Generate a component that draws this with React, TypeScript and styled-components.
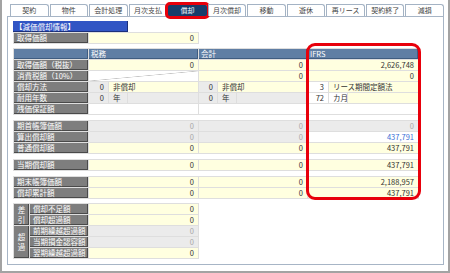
import React from "react";
import styled, { createGlobalStyle, css } from "styled-components";

const GlobalStyle = createGlobalStyle`
  html, body {
    margin: 0;
    padding: 0;
    background: #ffffff;
  }
  body {
    font-family: "Noto Sans CJK JP", "Noto Sans", sans-serif;
    font-size: 7.5px;
    color: #333333;
  }
  * {
    box-sizing: border-box;
  }
`;

type Tone = "yellow" | "grey" | "white" | "slash";
type Ink = "normal" | "muted" | "link";

const toneBg: Record<Tone, string> = {
  yellow: "#ffffe0",
  grey: "#ebebeb",
  white: "#ffffff",
  slash: "#ffffff",
};

const inkColor: Record<Ink, string> = {
  normal: "#333333",
  muted: "#a8a8a8",
  link: "#3b6fd6",
};

const Frame = styled.div`
  position: relative;
  width: 450px;
  height: 273px;
  border: 2px solid #a3a3a3;
  border-top: none;
  padding: 4px 4px 0 5px;
  background: #ffffff;
`;

const TabBar = styled.div`
  display: flex;
  gap: 1px;
  height: 12px;
  margin-left: 3px;
`;

const Tab = styled.div<{ $active?: boolean }>`
  position: relative;
  flex: 1;
  height: 12px;
  line-height: 11px;
  text-align: center;
  font-size: 7px;
  color: #444444;
  background: #ffffff;
  border: 1px solid #a4b3c4;
  border-bottom: none;
  border-top-right-radius: 3px;
  white-space: nowrap;

  ${(p) =>
    p.$active &&
    css`
      background: #173d6b;
      border-color: #173d6b;
      color: #ffffff;
      &::after {
        content: "";
        position: absolute;
        inset: -3px -4px -3px -4px;
        border: 3px solid #e8000b;
        border-radius: 5px;
      }
    `}
`;

const Panel = styled.div`
  height: 249px;
  border: 1px solid #a7b5c6;
  padding: 4px 5px;
`;

const SectionTitle = styled.div`
  width: 115px;
  height: 11px;
  line-height: 11px;
  padding-left: 2px;
  background: #3155c4;
  color: #ffffff;
  box-shadow: inset -1px -1px 0 #1b2f7a;
`;

const Group = styled.div<{ $cols: string; $gapTop?: number }>`
  display: grid;
  width: fit-content;
  grid-template-columns: ${(p) => p.$cols};
  grid-auto-rows: 10px;
  gap: 1px;
  margin-top: ${(p) => p.$gapTop ?? 0}px;
  padding: 1px;
  background: #dedede;
`;

const Label = styled.div<{ $rows?: number; $center?: boolean }>`
  grid-row: span ${(p) => p.$rows ?? 1};
  line-height: 10px;
  padding-left: 3px;
  background: #7e7e7e;
  color: #ffffff;
  white-space: nowrap;
  overflow: hidden;
  box-shadow: inset -1px -1px 0 #4a4a4a;

  ${(p) =>
    p.$center &&
    css`
      display: flex;
      align-items: center;
      justify-content: center;
      padding: 0 3px;
      white-space: normal;
      word-break: break-all;
      text-align: center;
      line-height: 10px;
    `}
`;

const HeadCell = styled.div`
  line-height: 10px;
  padding-left: 2px;
  background: #5f7ea4;
  color: #ffffff;
  box-shadow: inset -1px -1px 0 #3f5c80;
`;

const Cell = styled.div<{ $tone?: Tone; $align?: "left" | "right"; $ink?: Ink }>`
  height: 10px;
  line-height: 10px;
  padding: 0 4px;
  background: ${(p) => toneBg[p.$tone ?? "white"]};
  text-align: ${(p) => p.$align ?? "right"};
  color: ${(p) => inkColor[p.$ink ?? "normal"]};
  white-space: nowrap;
  overflow: hidden;

  ${(p) =>
    p.$tone === "slash" &&
    css`
      background: linear-gradient(
        to top left,
        transparent calc(50% - 0.6px),
        #c4c4c4 50%,
        transparent calc(50% + 0.6px)
      ),
        #ffffff;
    `}
`;

const Split = styled.div<{ $cols: string }>`
  display: grid;
  grid-template-columns: ${(p) => p.$cols};
  gap: 1px;
  background: #dedede;
`;

const Highlight = styled.div`
  position: absolute;
  left: 304px;
  top: 43px;
  width: 115px;
  height: 157px;
  border: 3px solid #e8000b;
  border-radius: 9px;
  pointer-events: none;
`;

const COLS = "74px 109px 108px 110px";

const tabs = [
  "契約",
  "物件",
  "会計処理",
  "月次支払",
  "償却",
  "月次償却",
  "移動",
  "遊休",
  "再リース",
  "契約終了",
  "減損",
];

type Value = { text?: string; tone?: Tone; ink?: Ink };
type Row = { label: string; values: Value[] };

const y = (text: string): Value => ({ text, tone: "yellow" });
const g = (text: string): Value => ({ text, tone: "grey", ink: "muted" });

// 期首帳簿価額 〜 普通償却額
const bookRows: Row[] = [
  { label: "期首帳簿価額", values: [g("0"), g("0"), g("0")] },
  { label: "算出償却額", values: [g("0"), g("0"), { text: "437,791", tone: "white", ink: "link" }] },
  { label: "普通償却額", values: [y("0"), y("0"), y("437,791")] },
];

const endRows: Row[] = [
  { label: "期末帳簿価額", values: [y("0"), y("0"), y("2,188,957")] },
  { label: "償却累計額", values: [y("0"), y("0"), y("437,791")] },
];

const renderRows = (rows: Row[]) =>
  rows.map((row) => (
    <React.Fragment key={row.label}>
      <Label>{row.label}</Label>
      {row.values.map((v, i) => (
        <Cell key={i} $tone={v.tone} $ink={v.ink}>
          {v.text}
        </Cell>
      ))}
    </React.Fragment>
  ));

const App = () => {
  return (
    <>
      <GlobalStyle />
      <Frame>
        <TabBar>
          {tabs.map((tab) => (
            <Tab key={tab} $active={tab === "償却"}>
              {tab}
            </Tab>
          ))}
        </TabBar>

        <Panel>
          <SectionTitle>【減価償却情報】</SectionTitle>
          <Group $cols="74px 109px">
            <Label>取得価額</Label>
            <Cell $tone="yellow">0</Cell>
          </Group>

          <Group $cols={COLS} $gapTop={4}>
            <HeadCell />
            <HeadCell>税務</HeadCell>
            <HeadCell>会計</HeadCell>
            <HeadCell>IFRS</HeadCell>

            <Label>取得価額（税抜）</Label>
            <Cell $tone="yellow">0</Cell>
            <Cell $tone="yellow">0</Cell>
            <Cell $tone="yellow">2,626,748</Cell>

            <Label>消費税額（10%）</Label>
            <Cell $tone="slash" />
            <Cell $tone="yellow">0</Cell>
            <Cell $tone="yellow">0</Cell>

            <Label>償却方法</Label>
            <Split $cols="19px 1fr">
              <Cell $tone="grey">0</Cell>
              <Cell $tone="yellow" $align="left">非償却</Cell>
            </Split>
            <Split $cols="18px 1fr">
              <Cell $tone="grey">0</Cell>
              <Cell $tone="yellow" $align="left">非償却</Cell>
            </Split>
            <Split $cols="20px 1fr">
              <Cell $tone="white">3</Cell>
              <Cell $tone="yellow" $align="left">リース期間定額法</Cell>
            </Split>

            <Label>耐用年数</Label>
            <Split $cols="19px 18px 1fr">
              <Cell $tone="grey">0</Cell>
              <Cell $tone="grey" $align="left">年</Cell>
              <Cell $tone="grey" />
            </Split>
            <Split $cols="18px 18px 1fr">
              <Cell $tone="grey">0</Cell>
              <Cell $tone="grey" $align="left">年</Cell>
              <Cell $tone="grey" />
            </Split>
            <Split $cols="20px 18px 1fr">
              <Cell $tone="white">72</Cell>
              <Cell $tone="white" $align="left">カ月</Cell>
              <Cell $tone="yellow" />
            </Split>

            <Label>残価保証額</Label>
            <Cell />
            <Cell />
            <Cell />
          </Group>

          <Group $cols={COLS} $gapTop={5}>
            {renderRows(bookRows)}
          </Group>

          <Group $cols={COLS} $gapTop={5}>
            <Label>当期償却額</Label>
            <Cell $tone="yellow">0</Cell>
            <Cell $tone="yellow">0</Cell>
            <Cell $tone="yellow">437,791</Cell>
          </Group>

          <Group $cols={COLS} $gapTop={5}>
            {renderRows(endRows)}
          </Group>

          <Group $cols="15px 58px 109px" $gapTop={4}>
            <Label $rows={2} $center>差引</Label>
            <Label>償却不足額</Label>
            <Cell $tone="yellow">0</Cell>
            <Label>償却超過額</Label>
            <Cell $tone="yellow">0</Cell>

            <Label $rows={3} $center>超過</Label>
            <Label>前期繰越超過額</Label>
            <Cell $tone="grey" $ink="muted">0</Cell>
            <Label>当期損金認容額</Label>
            <Cell $tone="grey" $ink="muted">0</Cell>
            <Label>翌期繰越超過額</Label>
            <Cell $tone="yellow">0</Cell>
          </Group>
        </Panel>

        <Highlight />
      </Frame>
    </>
  );
};

export default App;
